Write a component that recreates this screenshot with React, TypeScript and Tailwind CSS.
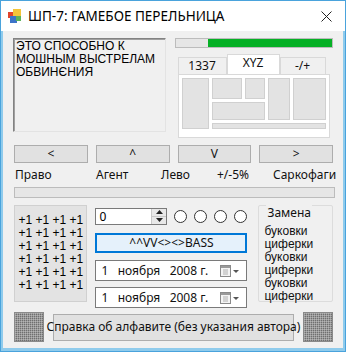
import React from "react";

const ui = { fontFamily: '"Noto Sans", "Open Sans", sans-serif' };
const ms = { fontFamily: '"Liberation Sans", Arial, sans-serif' };

function AppIcon() {
  return (
    <svg width="16" height="16" viewBox="0 0 16 16">
      <rect x="1" y="4" width="7" height="6" fill="#e0442c" />
      <rect x="6" y="1" width="8" height="8" fill="#f3c53a" />
      <rect x="3" y="8" width="7" height="7" fill="#3c74c8" />
      <rect x="9" y="8" width="5" height="5" fill="#5bb35a" />
    </svg>
  );
}

function Hatch({ id }: { id: string }) {
  return (
    <svg width="30" height="30" className="block">
      <defs>
        <pattern id={id} width="2" height="2" patternUnits="userSpaceOnUse">
          <rect width="2" height="2" fill="#9a9a9a" />
          <rect width="1" height="1" fill="#6f6f6f" />
          <rect x="1" y="1" width="1" height="1" fill="#b4b4b4" />
        </pattern>
      </defs>
      <rect width="30" height="30" fill={`url(#${id})`} />
      <rect x="0.5" y="0.5" width="29" height="29" fill="none" stroke="#8a8a8a" />
    </svg>
  );
}

function Btn({ children, className = "" }: { children: React.ReactNode; className?: string }) {
  return (
    <div
      className={`flex items-center justify-center bg-[#e1e1e1] border border-[#adadad] text-[12px] text-[#111] whitespace-nowrap ${className}`}
      style={ui}
    >
      {children}
    </div>
  );
}

function DatePicker() {
  return (
    <div className="w-[152px] h-[21px] bg-white border border-[#7a7a7a] flex items-center pl-[5px] pr-[6px] text-[12px] text-[#111]" style={ui}>
      <span className="whitespace-pre flex-1">1   ноября   2008 г.</span>
      <svg width="20" height="12" viewBox="0 0 20 12">
        <rect x="0.5" y="0.5" width="10" height="11" fill="#f4f4f4" stroke="#8a8a8a" />
        <rect x="1" y="1" width="9" height="2" fill="#9a9a9a" />
        <path d="M3 5h5M3 7h5M3 9h5" stroke="#b0b0b0" />
        <path d="M13 5h6l-3 3z" fill="#555" />
      </svg>
    </div>
  );
}

export default function App() {
  const cells = ["+1 +1 +1 +1", "+1 +1 +1 +1", "+1 +1 +1 +1", "+1 +1 +1 +1", "+1 +1 +1 +1", "+1 +1 +1 +1"];
  const swaps = ["буковки", "циферки", "буковки", "циферки", "буковки", "циферки"];
  const labels = ["Право", "Агент", "Лево", "+/-5%", "Саркофаги"];

  return (
    <div className="w-[346px] h-[352px] flex flex-col border border-[#4aa3dc] bg-[#8fcbec] overflow-hidden">
      {/* title bar */}
      <div className="h-[30px] bg-white flex items-center pl-[6px] pr-[13px]">
        <AppIcon />
        <span className="ml-[5px] text-[13.5px] text-black flex-1" style={ui}>
          ШП-7: ГАМЕБОЕ ПЕРЕЛЬНИЦА
        </span>
        <svg width="11" height="11" viewBox="0 0 11 11">
          <path d="M0.5 0.5l10 10M10.5 0.5l-10 10" stroke="#222" strokeWidth="1" />
        </svg>
      </div>

      {/* client */}
      <div className="flex-1 bg-[#f0f0f0] mx-[2px] mb-[3px] flex flex-col pl-[10px] pr-[10px] pt-[7px]">
        <div className="flex gap-[9px] h-[100px]">
          <div
            className="w-[154px] h-[94px] bg-[#f0f0f0] border border-[#828282] border-r-[#e3e3e3] border-b-[#e3e3e3] shadow-[inset_1px_1px_0_#a0a0a0] px-[2px] pt-[1px] text-[12px] leading-[13px] text-black"
            style={ms}
          >
            ЭТО СПОСОБНО К<br />МОШНЫМ ВЫСТРЕЛАМ<br />ОБВИНЄНИЯ
          </div>
          <div className="flex flex-col w-[160px]">
            <div className="h-[10px] bg-[#e6e6e6] border border-[#bcbcbc] flex justify-end">
              <div className="w-[124px] h-full bg-[#06b025]" />
            </div>
            <div className="mt-[6px] ml-[3px] flex items-end h-[20px]">
              <div className="w-[49px] h-[17px] bg-[#f0f0f0] border border-[#d9d9d9] border-b-0 flex items-center justify-center text-[12px] text-[#111]" style={ui}>1337</div>
              <div className="w-[53px] h-[20px] bg-white border border-[#d9d9d9] border-b-0 flex items-center justify-center text-[12px] text-[#111] pb-[3px]" style={ui}>XYZ</div>
              <div className="w-[46px] h-[17px] bg-[#f0f0f0] border border-[#d9d9d9] border-b-0 flex items-center justify-center text-[12px] text-[#111]" style={ui}>-/+</div>
            </div>
            <div className="ml-[3px] w-[152px] h-[64px] bg-white border border-[#d9d9d9] pl-[3px] pt-[3px]">
              <div className="grid grid-cols-[27px_30px_20px_22px_33px] grid-rows-[21px_18px_6px] gap-[3px]">
                <div className="row-span-3 bg-[#e3e3e3] border border-[#d0d0d0]" />
                <div className="bg-[#e3e3e3] border border-[#d0d0d0]" />
                <div className="bg-[#e3e3e3] border border-[#d0d0d0]" />
                <div className="row-span-2 bg-[#e3e3e3] border border-[#d0d0d0]" />
                <div className="row-span-2 bg-[#e3e3e3] border border-[#d0d0d0]" />
                <div className="col-span-2 bg-[#e3e3e3] border border-[#d0d0d0]" />
                <div className="col-span-4 bg-[#e3e3e3] border border-[#d0d0d0]" />
              </div>
            </div>
          </div>
        </div>

        {/* arrow buttons */}
        <div className="mt-[7px] flex gap-[8px] pl-[1px]">
          {["<", "^", "V", ">"].map((t) => (
            <Btn key={t} className="w-[74px] h-[18px]">{t}</Btn>
          ))}
        </div>

        {/* labels */}
        <div className="relative h-[17px] mt-[3px] text-[12px] text-[#111]" style={ui}>
          {labels.map((l, i) => (
            <span key={l} className={["absolute left-[2px]", "absolute left-[83px]", "absolute left-[148px]", "absolute left-[204px]", "absolute left-[260px]"][i]}>
              {l}
            </span>
          ))}
        </div>

        <div className="mt-[4px] ml-[1px] w-[321px] h-[11px] bg-[#e6e6e6] border border-[#bcbcbc]" />

        {/* lower area */}
        <div className="mt-[7px] flex pl-[1px]">
          <div className="w-[74px] h-[97px] bg-[#e3e3e3] border border-[#d0d0d0] flex flex-col items-center pt-[8px] text-[12px] leading-[13px] text-black" style={ms}>
            {cells.map((c, i) => (
              <div key={i}>{c}</div>
            ))}
          </div>

          <div className="ml-[8px] flex flex-col w-[152px]">
            <div className="flex items-center h-[18px] mt-[2px]">
              <div className="w-[76px] h-[17px] bg-white border border-[#7a7a7a] flex">
                <span className="flex-1 text-[12px] leading-[15px] pl-[3px]" style={ui}>0</span>
                <div className="w-[15px] flex flex-col border-l border-[#c8c8c8]">
                  <div className="flex-1 bg-[#e8e8e8] border-b border-[#c8c8c8] flex items-center justify-center">
                    <svg width="7" height="4"><path d="M0 4l3.5-4 3.5 4z" fill="#222" /></svg>
                  </div>
                  <div className="flex-1 bg-[#e8e8e8] flex items-center justify-center">
                    <svg width="7" height="4"><path d="M0 0l3.5 4 3.5-4z" fill="#222" /></svg>
                  </div>
                </div>
              </div>
              <div className="ml-[7px] flex gap-[7px]">
                {[0, 1, 2, 3].map((i) => (
                  <div key={i} className="w-[13px] h-[13px] rounded-full border border-[#333] bg-white" />
                ))}
              </div>
            </div>

            <div
              className="mt-[8px] w-[152px] h-[20px] bg-[#e5f1fb] border-2 border-[#0078d7] flex items-center justify-center text-[12px] text-[#111]"
              style={ui}
            >
              ^^VV&lt;&gt;&lt;&gt;BASS
            </div>
            <div className="mt-[7px]"><DatePicker /></div>
            <div className="mt-[6px]"><DatePicker /></div>
          </div>

          <div className="ml-[11px] w-[75px] h-[97px] border border-[#dcdcdc] rounded-[2px] relative pl-[5px] pt-[19px] text-[12px] leading-[13px] text-[#111]" style={ms}>
            <span className="absolute left-[7px] top-[-1px] bg-[#f0f0f0] px-[1px] leading-[16px]" style={ui}>Замена</span>
            {swaps.map((s, i) => (
              <div key={i}>{s}</div>
            ))}
          </div>
        </div>

        {/* bottom row */}
        <div className="mt-[4px] flex items-center gap-[9px] pl-[1px]">
          <Hatch id="h1" />
          <Btn className="w-[241px] h-[27px] text-[11.5px]">Справка об алфавите (без указания автора)</Btn>
          <Hatch id="h2" />
        </div>
      </div>
    </div>
  );
}
